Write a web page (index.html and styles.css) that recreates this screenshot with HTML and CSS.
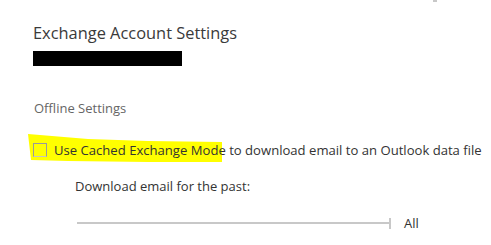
FILE: index.html
```html
<!DOCTYPE html>
<html lang="en">
<head>
  <meta charset="UTF-8">
  <meta name="viewport" content="width=device-width, initial-scale=1.0">
  <title>Exchange Account Settings</title>
  <link rel="stylesheet" href="styles.css">
</head>
<body>
  <div class="scroll-mark"></div>
  <div class="settings">
    <h1 class="title">Exchange Account Settings</h1>
    <div class="redacted"></div>

    <h2 class="section">Offline Settings</h2>

    <div class="cached-row">
      <svg class="marker" width="200" height="32" viewBox="0 0 200 32">
        <path d="M0 0 L12 1 L60 5 L120 7 L194 8 L194 28 L120 28 L40 27 L3 26 Z" fill="#ffff00"/>
      </svg>
      <label class="check">
        <span class="box"></span>
        <span>Use Cached Exchange Mode to download email to an Outlook data file</span>
      </label>
    </div>

    <div class="download">
      <p class="download-label">Download email for the past:</p>
      <div class="slider">
        <div class="track"></div>
        <div class="tick"></div>
        <span class="slider-value">All</span>
      </div>
    </div>
  </div>
</body>
</html>
```

FILE: styles.css
```css
body {
  margin: 0;
  background: #ffffff;
  font-family: "Open Sans", "Noto Sans", sans-serif;
  color: #333333;
}

.scroll-mark {
  position: absolute;
  top: 0;
  left: 433px;
  width: 4px;
  height: 2px;
  background: #c8c8c8;
}

.settings {
  padding: 22px 0 0 33px;
}

.title {
  margin: 0;
  font-size: 16.4px;
  font-weight: normal;
  line-height: 22px;
  color: #3a3a3a;
}

.redacted {
  margin-top: 7px;
  width: 149px;
  height: 15px;
  background: #000000;
}

.section {
  margin: 34px 0 0 1px;
  font-size: 13px;
  font-weight: normal;
  line-height: 16px;
  color: #666666;
}

.cached-row {
  position: relative;
  margin-top: 24px;
}

.marker {
  position: absolute;
  left: -5px;
  top: -6px;
}

.check {
  position: relative;
  display: flex;
  align-items: center;
  gap: 7px;
  font-size: 13.1px;
  line-height: 20px;
  white-space: nowrap;
  color: #333333;
}

.box {
  flex: none;
  width: 12px;
  height: 12px;
  border: 1px solid #9a9a9a;
  border-bottom-color: #c4c4c4;
}

.download {
  padding-left: 42px;
}

.download-label {
  margin: 16px 0 0;
  font-size: 13px;
  line-height: 20px;
}

.slider {
  display: flex;
  align-items: center;
  margin-top: 17px;
  padding-left: 2px;
}

.track {
  width: 312px;
  height: 2px;
  background: #c8c8c8;
}

.tick {
  width: 2px;
  height: 11px;
  background: #c8c8c8;
}

.slider-value {
  margin-left: 13px;
  font-size: 13px;
  line-height: 20px;
}
```
